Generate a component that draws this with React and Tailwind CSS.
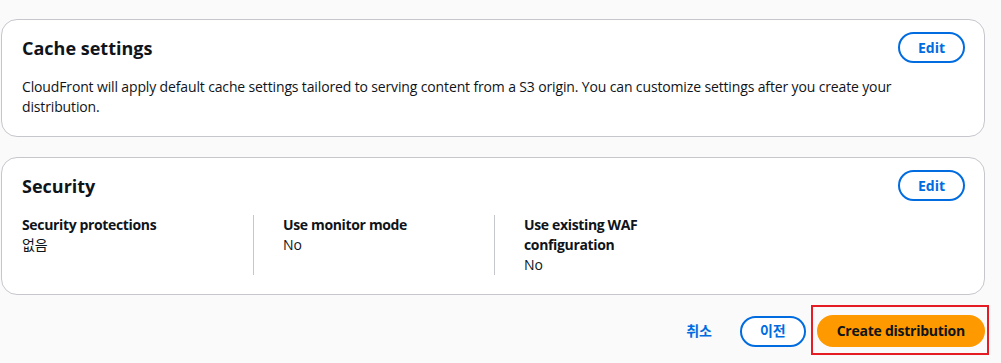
import React from "react";

const font = { fontFamily: '"Open Sans", "Noto Sans CJK KR", sans-serif' };

function EditButton() {
  return (
    <button className="h-[31px] rounded-full border-2 border-[#006ce0] bg-white px-[18px] text-[14px] font-bold leading-[20px] text-[#006ce0]">
      Edit
    </button>
  );
}

function Column({ label, value, className }) {
  return (
    <div className={className}>
      <div className="text-[14px] font-bold leading-[20px] tracking-[-0.35px] text-[#0f141a]">{label}</div>
      <div className="text-[14px] leading-[20px] tracking-[-0.1px] text-[#0f141a]">{value}</div>
    </div>
  );
}

export default function App() {
  return (
    <div className="min-h-[363px] bg-[#fafafa] pl-px pr-[16px] pt-[19px]" style={font}>
      <div className="flex flex-col gap-5">
        <section className="rounded-[16px] border border-[#c6c6cd] bg-white pl-[20px] pr-[19px] pt-[12px] pb-[19px]">
          <div className="flex h-[31px] items-center justify-between">
            <h2 className="text-[18px] font-bold leading-[22px] text-[#0f141a]">Cache settings</h2>
            <EditButton />
          </div>
          <p className="mt-[14px] max-w-[900px] text-[14px] leading-[20px] tracking-[-0.14px] text-[#0f141a]">
            CloudFront will apply default cache settings tailored to serving content from a S3 origin. You can customize settings after you create your distribution.
          </p>
        </section>

        <section className="rounded-[16px] border border-[#c6c6cd] bg-white pl-[20px] pr-[19px] pt-[12px] pb-[19px]">
          <div className="flex h-[31px] items-center justify-between">
            <h2 className="text-[18px] font-bold leading-[22px] text-[#0f141a]">Security</h2>
            <EditButton />
          </div>
          <div className="mt-[14px] flex">
            <Column className="w-[231px]" label="Security protections" value="없음" />
            <Column className="w-[241px] border-l border-[#c6c6cd] pl-[29px] pr-[20px]" label="Use monitor mode" value="No" />
            <Column className="w-[241px] border-l border-[#c6c6cd] pl-[29px] pr-[30px]" label="Use existing WAF configuration" value="No" />
          </div>
        </section>

        <div className="flex items-center justify-end gap-2">
          <button className="h-[31px] rounded-full border-2 border-transparent px-[18px] text-[14px] font-bold leading-[20px] text-[#006ce0]">
            취소
          </button>
          <button className="mr-[3px] h-[31px] rounded-full border-2 border-[#006ce0] bg-white px-[18px] text-[14px] font-bold leading-[20px] text-[#006ce0]">
            이전
          </button>
          <div className="relative">
            <button className="h-[32px] rounded-full border-2 border-[#ff9900] bg-[#ff9900] px-[18px] text-[14px] font-bold leading-[20px] tracking-[-0.25px] text-[#0f141a]">
              Create distribution
            </button>
            <div className="pointer-events-none absolute -left-[6px] -right-[4px] -top-[10px] -bottom-[8px] border-2 border-[#e51c23]" />
          </div>
        </div>
      </div>
    </div>
  );
}
